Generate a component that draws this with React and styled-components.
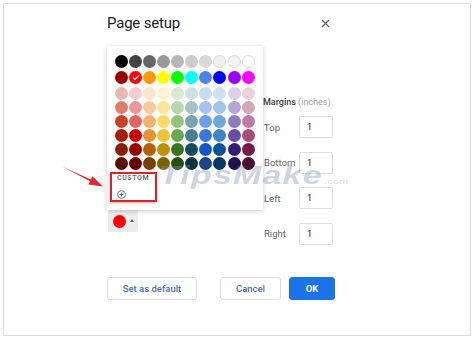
import React from 'react';
import styled, { createGlobalStyle } from 'styled-components';

const GlobalStyle = createGlobalStyle`
  html, body { margin: 0; padding: 0; background: #fff; }
  body { font-family: Roboto, "Liberation Sans", Arial, sans-serif; }
`;

const PALETTE = [
  ['#000000', '#434343', '#666666', '#999999', '#b7b7b7', '#cccccc', '#d9d9d9', '#efefef', '#f3f3f3', '#ffffff'],
  ['#980000', '#ff0000', '#ff9900', '#ffff00', '#00ff00', '#00ffff', '#4a86e8', '#0000ff', '#9900ff', '#ff00ff'],
  ['#e6b8af', '#f4cccc', '#fce5cd', '#fff2cc', '#d9ead3', '#d0e0e3', '#c9daf8', '#cfe2f3', '#d9d2e9', '#ead1dc'],
  ['#dd7e6b', '#ea9999', '#f9cb9c', '#ffe599', '#b6d7a8', '#a2c4c9', '#a4c2f4', '#9fc5e8', '#b4a7d6', '#d5a6bd'],
  ['#cc4125', '#e06666', '#f6b26b', '#ffd966', '#93c47d', '#76a5af', '#6d9eeb', '#6fa8dc', '#8e7cc3', '#c27ba0'],
  ['#a61c00', '#cc0000', '#e69138', '#f1c232', '#6aa84f', '#45818e', '#3c78d8', '#3d85c6', '#674ea7', '#a64d79'],
  ['#85200c', '#990000', '#b45f06', '#bf9000', '#38761d', '#134f5c', '#1155cc', '#0b5394', '#351c75', '#741b47'],
  ['#5b0f00', '#660000', '#783f04', '#7f6000', '#274e13', '#0c343d', '#1c4587', '#073763', '#20124d', '#4c1130'],
];

const Frame = styled.div`
  position: relative;
  box-sizing: border-box;
  width: 468px;
  height: 333px;
  margin: 3px;
  border: 1px solid #dadada;
  padding: 6px 0 0 103px;
`;

const Header = styled.div`
  display: flex;
  align-items: center;
  justify-content: space-between;
  width: 228px;
  height: 26px;
`;

const Title = styled.h1`
  margin: 0;
  font-size: 15px;
  font-weight: 400;
  color: #202124;
  letter-spacing: -0.2px;
`;

const Close = styled.button`
  display: flex;
  align-items: center;
  justify-content: center;
  width: 12px;
  height: 12px;
  margin-right: 4px;
  padding: 0;
  border: none;
  background: none;
`;

const Body = styled.div`
  display: flex;
`;

const ColorColumn = styled.div`
  width: 156px;
  padding-top: 174px;
`;

const ColorButtonWrap = styled.div`
  position: relative;
  margin-left: 1px;
`;

const ColorButton = styled.div`
  display: flex;
  align-items: center;
  gap: 4px;
  box-sizing: border-box;
  width: 30px;
  height: 22px;
  padding-left: 4.5px;
  background: #ececec;
  border-radius: 2px;
`;

const Dot = styled.span`
  width: 13px;
  height: 13px;
  border-radius: 50%;
  background: ${p => p.$color};
`;

const Caret = styled.span`
  width: 0;
  height: 0;
  margin-top: -2px;
  border-left: 2.5px solid transparent;
  border-right: 2.5px solid transparent;
  border-bottom: 3px solid #5f6368;
`;

const Popup = styled.div`
  position: absolute;
  left: -1px;
  bottom: 100%;
  box-sizing: border-box;
  width: 156px;
  padding: 9px 8px 8px;
  background: #fff;
  border-radius: 2px;
  box-shadow: 0 1px 5px rgba(0, 0, 0, 0.22);
  display: flex;
  flex-direction: column;
  z-index: 2;
`;

const SwatchRow = styled.div`
  display: grid;
  grid-template-columns: repeat(10, 13px);
  column-gap: 1.07px;
  margin-bottom: ${p => p.$after}px;
`;

const Swatch = styled.span`
  position: relative;
  display: flex;
  align-items: center;
  justify-content: center;
  width: 13px;
  height: 13px;
  border-radius: 50%;
  background: ${p => p.$color};
  box-shadow: ${p => (p.$light ? 'inset 0 0 0 1px #dedede' : 'none')};
`;

const CustomBox = styled.div`
  box-sizing: border-box;
  width: 47px;
  height: 30px;
  margin: 2px 0 0 -5px;
  padding: 0 0 0 5px;
  border: 2px solid #cc2a30;
  box-shadow: 0 1px 3px rgba(120, 0, 0, 0.35);
`;

const CustomLabel = styled.div`
  font-size: 7px;
  line-height: 8px;
  font-weight: 500;
  letter-spacing: 0.6px;
  color: #5f6368;
`;

const PlusIcon = styled.svg`
  display: block;
  margin-top: 8px;
`;

const MarginsColumn = styled.div`
  width: 72px;
  padding-top: 60px;
  display: flex;
  flex-direction: column;
  gap: 13.67px;
`;

const MarginsHeading = styled.div`
  font-size: 9px;
  line-height: 12px;
  font-weight: 500;
  color: #3c4043;
  margin-bottom: -5.67px;
  white-space: nowrap;
`;

const Muted = styled.span`
  font-weight: 400;
  color: #9aa0a6;
`;

const MarginRow = styled.label`
  display: flex;
  align-items: center;
  height: 22px;
  padding-left: 1px;
`;

const MarginLabel = styled.span`
  width: 35px;
  font-size: 9.5px;
  color: #5f6368;
`;

const MarginInput = styled.div`
  box-sizing: border-box;
  width: 34px;
  height: 22px;
  padding-left: 7px;
  border: 1px solid #dadce0;
  border-radius: 2px;
  font-size: 9px;
  line-height: 20px;
  color: #202124;
`;

const Footer = styled.div`
  display: flex;
  margin-top: 32px;
`;

const Button = styled.button`
  box-sizing: border-box;
  width: ${p => p.$w}px;
  height: 23px;
  margin-right: ${p => p.$mr || 0}px;
  padding: 0;
  border: 1px solid ${p => (p.$primary ? '#1a73e8' : '#dadce0')};
  border-radius: 3px;
  background: ${p => (p.$primary ? '#1a73e8' : '#fff')};
  color: ${p => (p.$primary ? '#fff' : '#4a72b4')};
  font-family: Roboto, "Liberation Sans", Arial, sans-serif;
  font-size: 9.5px;
  font-weight: ${p => (p.$primary ? 700 : 500)};
`;

const Arrow = styled.svg`
  position: absolute;
  left: 54px;
  top: 156px;
  z-index: 3;
`;

const Watermark = styled.div`
  position: absolute;
  left: 155px;
  top: 158px;
  z-index: 3;
  display: flex;
  align-items: baseline;
  transform: scaleX(1.3);
  transform-origin: left center;
  font-family: "Liberation Sans", Arial, sans-serif;
  font-size: 26px;
  line-height: 26px;
  font-weight: 700;
  font-style: italic;
  letter-spacing: 1px;
  color: rgba(125, 145, 180, 0.4);
  pointer-events: none;
  white-space: nowrap;
`;

const Dotcom = styled.span`
  margin-left: 1px;
  font-size: 8px;
  font-weight: 400;
  font-style: normal;
  letter-spacing: 0.3px;
  color: rgba(150, 165, 190, 0.4);
`;

const LIGHT = ['#efefef', '#f3f3f3', '#ffffff'];
const ROW_GAPS = [3.2, 2.6, 1, 1, 1, 1, 1, 0];

export default function App() {
  return (
    <>
      <GlobalStyle />
      <Frame>
        <Header>
          <Title>Page setup</Title>
          <Close aria-label="Close">
            <svg width="9" height="9" viewBox="0 0 9 9">
              <path d="M1 1L8 8M8 1L1 8" stroke="#5f6368" strokeWidth="1.3" />
            </svg>
          </Close>
        </Header>
        <Body>
          <ColorColumn>
            <ColorButtonWrap>
              <Popup>
                {PALETTE.map((row, r) => (
                  <SwatchRow key={r} $after={ROW_GAPS[r]}>
                    {row.map((c, i) => (
                      <Swatch key={c + i} $color={c} $light={LIGHT.includes(c)}>
                        {r === 1 && i === 1 && (
                          <svg width="8" height="7" viewBox="0 0 8 7">
                            <path d="M1 3.6L3 5.5L7 1.3" stroke="#fff" strokeWidth="1.2" fill="none" />
                          </svg>
                        )}
                      </Swatch>
                    ))}
                  </SwatchRow>
                ))}
                <CustomBox>
                  <CustomLabel>CUSTOM</CustomLabel>
                  <PlusIcon width="9" height="9" viewBox="0 0 9 9">
                    <circle cx="4.5" cy="4.5" r="3.9" stroke="#5f6368" strokeWidth="0.9" fill="none" />
                    <path d="M4.5 2.5V6.5M2.5 4.5H6.5" stroke="#5f6368" strokeWidth="0.9" />
                  </PlusIcon>
                </CustomBox>
              </Popup>
              <ColorButton>
                <Dot $color="#ff0000" />
                <Caret />
              </ColorButton>
            </ColorButtonWrap>
          </ColorColumn>
          <MarginsColumn>
            <MarginsHeading>
              Margins <Muted>(inches)</Muted>
            </MarginsHeading>
            {['Top', 'Bottom', 'Left', 'Right'].map(name => (
              <MarginRow key={name}>
                <MarginLabel>{name}</MarginLabel>
                <MarginInput>1</MarginInput>
              </MarginRow>
            ))}
          </MarginsColumn>
        </Body>
        <Footer>
          <Button $w={90} $mr={23}>Set as default</Button>
          <Button $w={61} $mr={8}>Cancel</Button>
          <Button $w={46} $primary>OK</Button>
        </Footer>
        <Arrow width="50" height="30" viewBox="58 160 50 30">
          <polygon
            points="62,166.5 90.8,179.5 92.4,176.3 103,186.5 88.4,184.5 90,181.3"
            fill="#e5262b"
          />
        </Arrow>
        <Watermark>
          TipsMake<Dotcom>.com</Dotcom>
        </Watermark>
      </Frame>
    </>
  );
}
